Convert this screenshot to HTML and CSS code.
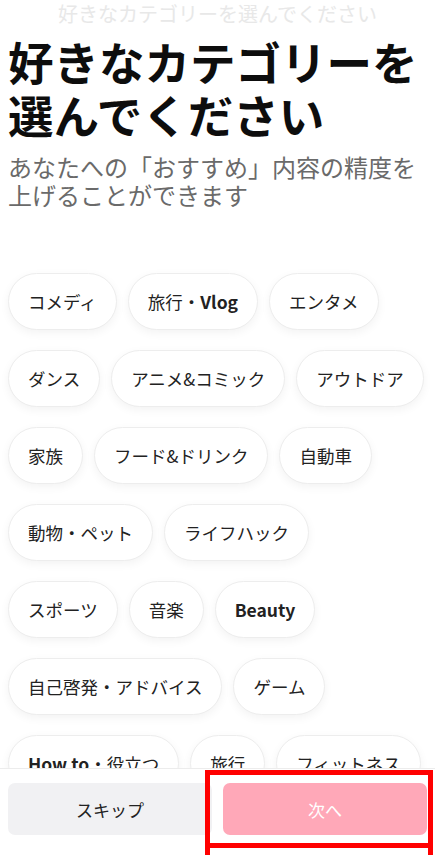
FILE: index.html
```html
<!DOCTYPE html>
<html lang="ja">
<head>
  <meta charset="UTF-8">
  <meta name="viewport" content="width=device-width, initial-scale=1.0">
  <title>カテゴリー選択</title>
  <link rel="stylesheet" href="styles.css">
</head>
<body>
  <div class="screen">
    <div class="nav-title">好きなカテゴリーを選んでください</div>

    <div class="content">
      <h1 class="title">好きなカテゴリーを選んでください</h1>
      <p class="subtitle">あなたへの「おすすめ」内容の精度を上げることができます</p>

      <div class="chips">
        <button class="chip">コメディ</button>
        <button class="chip">旅行・<span class="latin">Vlog</span></button>
        <button class="chip">エンタメ</button>
        <button class="chip">ダンス</button>
        <button class="chip">アニメ&amp;コミック</button>
        <button class="chip">アウトドア</button>
        <button class="chip">家族</button>
        <button class="chip">フード&amp;ドリンク</button>
        <button class="chip">自動車</button>
        <button class="chip">動物・ペット</button>
        <button class="chip">ライフハック</button>
        <button class="chip">スポーツ</button>
        <button class="chip">音楽</button>
        <button class="chip"><span class="latin">Beauty</span></button>
        <button class="chip">自己啓発・アドバイス</button>
        <button class="chip">ゲーム</button>
        <button class="chip"><span class="latin">How to</span>・役立つ</button>
        <button class="chip">旅行</button>
        <button class="chip">フィットネス</button>
      </div>
    </div>

    <!-- 下のボタン -->
    <div class="footer">
      <button class="btn btn-skip">スキップ</button>
      <button class="btn btn-next">次へ</button>
      <div class="mark"></div>
    </div>
  </div>
</body>
</html>
```

FILE: styles.css
```css
* {
box-sizing: border-box;
}
body {
margin: 0;
padding: 0;
background-color: #fff;
color: #161616;
font-family: "Noto Sans CJK JP", "Noto Sans", sans-serif;
}
.screen {
height: 855px;
display: flex;
flex-direction: column;
overflow: hidden;
}
.nav-title {
height: 28px;
line-height: 28px;
text-align: center;
font-size: 20px;
color: #e8e8e8;
flex-shrink: 0;
}
.content {
flex: 1;
overflow: hidden;
padding: 0 8px;
}
.title {
margin: 7px 0 0 0;
font-size: 45.5px;
line-height: 53px;
font-weight: 700;
color: #0d0d0d;
}
.subtitle {
margin: 12px 0 0 0;
font-size: 24px;
line-height: 28px;
color: #6a6a6a;
}
.chips {
display: flex;
flex-wrap: wrap;
gap: 20px 11px;
margin-top: 64px;
}
.chip {
height: 57px;
padding: 0 19px;
border: 1px solid #ededed;
border-radius: 29px;
background-color: #fff;
box-shadow: 0 3px 10px rgba(0, 0, 0, 0.05);
font-family: inherit;
font-size: 17.5px;
color: #222;
display: flex;
align-items: center;
}
.latin {
font-weight: 700;
}

/* barra de baixo */
.footer {
position: relative;
height: 87px;
flex-shrink: 0;
border-top: 1px solid #ececec;
background-color: #fff;
display: grid;
grid-template-columns: 1fr 1fr;
gap: 11px;
padding: 14px 8px 0 8px;
align-items: start;
}
.btn {
height: 52px;
border: none;
border-radius: 7px;
font-family: inherit;
font-size: 17px;
}
.btn-skip {
background-color: #f1f1f3;
color: #222;
}
.btn-next {
background-color: #ffa8b8;
color: #fff;
}
/* marcação vermelha por cima do botão */
.mark {
position: absolute;
left: 205px;
top: 1px;
width: 228px;
height: 86px;
border: 5px solid #f00;
border-bottom: none;
}
.mark::after {
content: "";
position: absolute;
left: 0;
right: 0;
top: 68px;
height: 5px;
background-color: #f00;
}
```
